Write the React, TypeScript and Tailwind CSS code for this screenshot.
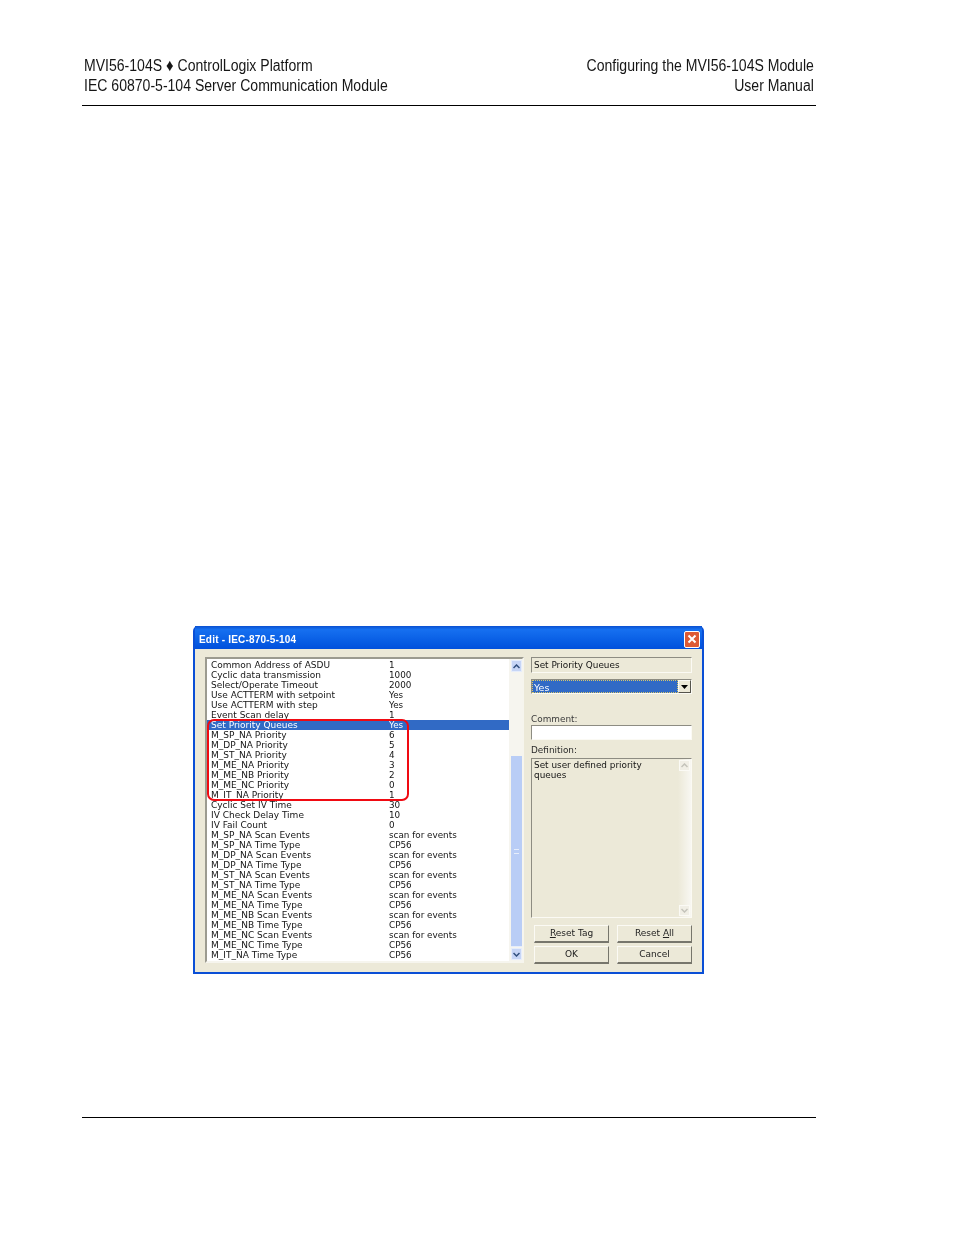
const rows: [string, string][] = [
  ["Common Address of ASDU", "1"],
  ["Cyclic data transmission", "1000"],
  ["Select/Operate Timeout", "2000"],
  ["Use ACTTERM with setpoint", "Yes"],
  ["Use ACTTERM with step", "Yes"],
  ["Event Scan delay", "1"],
  ["Set Priority Queues", "Yes"],
  ["M_SP_NA Priority", "6"],
  ["M_DP_NA Priority", "5"],
  ["M_ST_NA Priority", "4"],
  ["M_ME_NA Priority", "3"],
  ["M_ME_NB Priority", "2"],
  ["M_ME_NC Priority", "0"],
  ["M_IT_NA Priority", "1"],
  ["Cyclic Set IV Time", "30"],
  ["IV Check Delay Time", "10"],
  ["IV Fail Count", "0"],
  ["M_SP_NA Scan Events", "scan for events"],
  ["M_SP_NA Time Type", "CP56"],
  ["M_DP_NA Scan Events", "scan for events"],
  ["M_DP_NA Time Type", "CP56"],
  ["M_ST_NA Scan Events", "scan for events"],
  ["M_ST_NA Time Type", "CP56"],
  ["M_ME_NA Scan Events", "scan for events"],
  ["M_ME_NA Time Type", "CP56"],
  ["M_ME_NB Scan Events", "scan for events"],
  ["M_ME_NB Time Type", "CP56"],
  ["M_ME_NC Scan Events", "scan for events"],
  ["M_ME_NC Time Type", "CP56"],
  ["M_IT_NA Time Type", "CP56"],
];

function Chevron({ up, color }: { up: boolean; color: string }) {
  return (
    <svg width="7" height="5" viewBox="0 0 7 5" fill="none">
      <path d={up ? "M0.5 4L3.5 1L6.5 4" : "M0.5 1L3.5 4L6.5 1"} stroke={color} strokeWidth="1.5" />
    </svg>
  );
}

function ScrollBtn({ up, pale }: { up: boolean; pale?: boolean }) {
  return (
    <div
      className={
        pale
          ? "w-[11px] h-[11px] shrink-0 flex items-center justify-center bg-[#f1efe6] border border-[#fbfaf5]"
          : "w-[11px] h-[12px] shrink-0 flex items-center justify-center bg-[#c6d5f6] border border-[#e6edfb]"
      }
    >
      <Chevron up={up} color={pale ? "#c4c3ba" : "#32507f"} />
    </div>
  );
}

function Btn({ children }: { children: React.ReactNode }) {
  return (
    <div className="w-[75px] h-[18px] flex items-center justify-center bg-[#ece9d8] border border-[#fbfaf4] border-r-[#77766c] border-b-2 border-b-[#77766c] text-[9px] leading-none text-[#222]">
      {children}
    </div>
  );
}

export default function App() {
  return (
    <div className="relative w-[954px] h-[1235px] bg-white flex flex-col items-start overflow-hidden">
      <header className="ml-[82px] mt-[56px] w-[734px] h-[50px] px-[2px] border-b border-black flex justify-between text-[16px] leading-[20px] text-[#161616] font-['Liberation_Sans',sans-serif] whitespace-nowrap">
        <div className="origin-left scale-x-[0.878]">
          <div>MVI56-104S <span className="text-[17px] leading-none">♦</span> ControlLogix Platform</div>
          <div>IEC 60870-5-104 Server Communication Module</div>
        </div>
        <div className="text-right origin-right scale-x-[0.878]">
          <div>Configuring the MVI56-104S Module</div>
          <div>User Manual</div>
        </div>
      </header>

      <section className="mt-[520px] ml-[193px] w-[511px] h-[348px] flex flex-col bg-[#0a4fd6] rounded-t-[5px] px-[2px] pb-[2px] blur-[0.3px] font-['DejaVu_Sans',sans-serif] text-[#141414]">
        <div className="h-[23px] shrink-0 flex items-center justify-between pt-[3px] pl-[4px] pr-[2px] bg-gradient-to-b from-[#0b4fd0] via-[#1670f0] via-15% to-[#0250dc] text-white">
          <span className="text-[10px] font-bold font-['Liberation_Sans',sans-serif] tracking-[0.2px]">Edit - IEC-870-5-104</span>
          <div className="w-[16px] h-[17px] rounded-[2px] border border-white bg-[#dd5a35] flex items-center justify-center">
            <svg width="10" height="10" viewBox="0 0 10 10" fill="none">
              <path d="M1.5 1.5L8.5 8.5M8.5 1.5L1.5 8.5" stroke="white" strokeWidth="2" />
            </svg>
          </div>
        </div>

        <div className="flex-1 bg-[#ece9d8] flex pl-[10px] pt-[8px] pr-[10px] pb-[9px] gap-[7px] min-h-0">
          <div className="w-[319px] h-[306px] shrink-0 flex bg-white border-2 border-[#9c9b90] border-r-[#f6f5ee] border-b-[#f6f5ee] text-[9px] leading-[10px]">
            <div className="flex-1 flex flex-col min-w-0 pt-[0.5px]">
              {rows.map(([name, value], i) => (
                <div
                  key={name}
                  className={`h-[10.04px] shrink-0 grid grid-cols-[178px_1fr] pl-[4px] whitespace-nowrap ${i === 6 ? "bg-[#316ac5] text-white" : ""}`}
                >
                  <span>{name}</span>
                  <span className="text-[8.8px]">{value}</span>
                </div>
              ))}
            </div>
            <div className="w-[13px] shrink-0 flex flex-col items-end bg-[#f6f5ef] pt-[1px] pb-[1px]">
              <ScrollBtn up />
              <div className="flex-1 w-[11px] flex flex-col justify-end pb-[1px]">
                <div className="h-[191px] bg-[#b9cdf6] border-b border-[#e6edfb] flex items-center justify-center">
                  <div className="w-[5px] h-[5px] border-y border-[#e6edfb]" />
                </div>
              </div>
              <ScrollBtn up={false} />
            </div>
          </div>

          <div className="flex-1 flex flex-col items-start min-w-0">
            <div className="w-[161px] h-[16px] shrink-0 border border-[#8d8c82] border-r-[#fbfaf4] border-b-[#fbfaf4] pl-[2px] text-[8.9px] leading-[14px]">
              Set Priority Queues
            </div>
            <div className="mt-[6px] w-[161px] h-[15px] shrink-0 flex border border-[#8d8c82] border-r-[#fbfaf4] border-b-[#fbfaf4] bg-white">
              <div className="flex-1 bg-[#316ac5] text-white text-[9.5px] leading-[13px] pl-px border border-dotted border-[#d8c66a]">
                Yes
              </div>
              <div className="w-[13px] flex items-center justify-center bg-[#ece9d8] border border-[#fbfaf4] border-r-[#55544c] border-b-[#55544c]">
                <svg width="7" height="4" viewBox="0 0 7 4"><path d="M0 0H7L3.5 4Z" fill="#000" /></svg>
              </div>
            </div>
            <div className="mt-[20px] h-[11px] shrink-0 text-[8.9px] leading-[11px] text-[#3a3a3a]">Comment:</div>
            <div className="w-[161px] h-[15px] shrink-0 bg-white border border-[#8d8c82] border-r-[#fbfaf4] border-b-[#fbfaf4]" />
            <div className="mt-[4px] h-[12px] shrink-0 text-[8.9px] leading-[12px] text-[#2a2a2a]">Definition:</div>
            <div className="mt-[2px] w-[161px] h-[160px] shrink-0 flex border border-[#8d8c82] border-r-[#fbfaf4] border-b-[#fbfaf4] text-[8.9px] leading-[10px]">
              <div className="flex-1 pl-[2px] pt-[1px]">
                Set user defined priority
                <br />
                queues
              </div>
              <div className="w-[13px] shrink-0 flex flex-col items-center justify-between py-[1px] bg-gradient-to-r from-[#ece9d8] to-[#f8f7f2]">
                <ScrollBtn up pale />
                <ScrollBtn up={false} pale />
              </div>
            </div>
            <div className="mt-[7px] ml-[3px] grid grid-cols-[75px_75px] gap-x-[8px] gap-y-[3px]">
              <Btn><span><span className="underline">R</span>eset Tag</span></Btn>
              <Btn><span>Reset <span className="underline">A</span>ll</span></Btn>
              <Btn>OK</Btn>
              <Btn>Cancel</Btn>
            </div>
          </div>
        </div>
      </section>

      <div className="absolute left-[207px] top-[719px] w-[202px] h-[82px] rounded-[7px] border-2 border-[#f00a12]" />

      <div className="mt-[143px] ml-[82px] w-[734px] h-px bg-black" />
    </div>
  );
}
